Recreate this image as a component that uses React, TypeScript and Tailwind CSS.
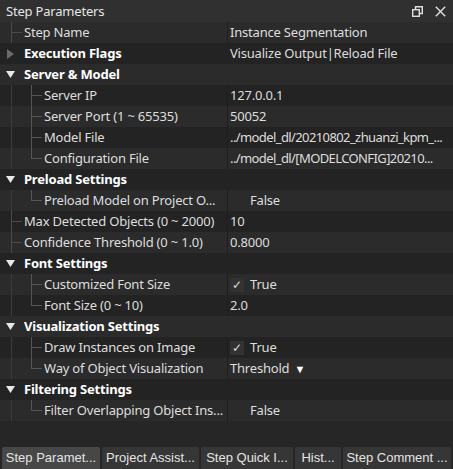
import React from "react";

type Row =
  | { kind: "group"; label: string; open: boolean; value?: string }
  | { kind: "leaf"; label: string; value: string; depth: 0 | 1; last?: boolean; check?: "on" | "off"; drop?: boolean; tight?: boolean };

const rows: Row[] = [
  { kind: "leaf", label: "Step Name", value: "Instance Segmentation", depth: 0 },
  { kind: "group", label: "Execution Flags", open: false, value: "Visualize Output|Reload File" },
  { kind: "group", label: "Server & Model", open: true },
  { kind: "leaf", label: "Server IP", value: "127.0.0.1", depth: 1 },
  { kind: "leaf", label: "Server Port (1 ~ 65535)", value: "50052", depth: 1 },
  { kind: "leaf", label: "Model File", value: "../model_dl/20210802_zhuanzi_kpm_...", depth: 1, tight: true },
  { kind: "leaf", label: "Configuration File", value: "../model_dl/[MODELCONFIG]20210...", depth: 1, last: true, tight: true },
  { kind: "group", label: "Preload Settings", open: true },
  { kind: "leaf", label: "Preload Model on Project O...", value: "False", depth: 1, last: true, check: "off" },
  { kind: "leaf", label: "Max Detected Objects (0 ~ 2000)", value: "10", depth: 0 },
  { kind: "leaf", label: "Confidence Threshold (0 ~ 1.0)", value: "0.8000", depth: 0 },
  { kind: "group", label: "Font Settings", open: true },
  { kind: "leaf", label: "Customized Font Size", value: "True", depth: 1, check: "on" },
  { kind: "leaf", label: "Font Size (0 ~ 10)", value: "2.0", depth: 1, last: true },
  { kind: "group", label: "Visualization Settings", open: true },
  { kind: "leaf", label: "Draw Instances on Image", value: "True", depth: 1, check: "on" },
  { kind: "leaf", label: "Way of Object Visualization", value: "Threshold", depth: 1, last: true, drop: true },
  { kind: "group", label: "Filtering Settings", open: true },
  { kind: "leaf", label: "Filter Overlapping Object Ins...", value: "False", depth: 1, last: true, check: "off" },
];

const tabs = [
  { label: "Step Paramet...", w: "w-[98px]", active: true },
  { label: "Project Assist...", w: "w-[97px]" },
  { label: "Step Quick I...", w: "w-[92px]" },
  { label: "Hist...", w: "w-[46px]" },
  { label: "Step Comment ...", w: "w-[108px]" },
];

function Branch({ row }: { row: Extract<Row, { kind: "leaf" }> }) {
  if (row.depth === 0) {
    return (
      <div className="relative w-[24px] h-full shrink-0">
        <span className="absolute left-[11px] top-0 bottom-0 w-px bg-[#4a4a4a]" />
        <span className="absolute left-[11px] top-[10px] w-[11px] h-px bg-[#4a4a4a]" />
      </div>
    );
  }
  return (
    <div className="relative w-[44px] h-full shrink-0">
      <span className="absolute left-[11px] top-0 bottom-0 w-px bg-[#3c3c3c]" />
      <span className={`absolute left-[31px] top-0 w-px bg-[#555] ${row.last ? "h-[11px]" : "h-full"}`} />
      <span className="absolute left-[31px] top-[10px] w-[11px] h-px bg-[#555]" />
    </div>
  );
}

export default function App() {
  return (
    <div className="w-[453px] h-[469px] bg-[#262626] flex flex-col overflow-hidden text-[13px] tracking-[-0.2px] text-[#dedede] [font-family:'Noto_Sans','Open_Sans',sans-serif]">
      {/* title */}
      <div className="h-[22px] shrink-0 bg-[#303030] flex items-center justify-between pl-[6px] pr-[6px]">
        <span className="text-[#e6e6e6] leading-none">Step Parameters</span>
        <div className="flex items-center gap-[12px] pr-[1px]">
          <svg width="11" height="11" viewBox="0 0 11 11" fill="none" stroke="#e0e0e0" strokeWidth="1.4">
            <rect x="0.7" y="3.7" width="6.6" height="6.6" />
            <path d="M3.5 3.5V0.7H10.3V7.5H7.5" />
          </svg>
          <svg width="11" height="11" viewBox="0 0 11 11" stroke="#e0e0e0" strokeWidth="1.4">
            <path d="M0.8 0.8L10.2 10.2M10.2 0.8L0.8 10.2" />
          </svg>
        </div>
      </div>

      {/* tree */}
      <div className="flex flex-col">
        {rows.map((row, i) => {
          const bg = i % 2 === 0 ? "bg-[#2b2b2b]" : "bg-[#232323]";
          if (row.kind === "group") {
            return (
              <div key={i} className={`h-[21px] flex items-center ${bg}`}>
                <div className="w-[24px] h-full flex items-center justify-center pr-[4px]">
                  {row.open ? (
                    <svg width="9" height="7" viewBox="0 0 9 7"><path d="M0 0H9L4.5 7Z" fill="#e8e8e8" /></svg>
                  ) : (
                    <svg width="7" height="10" viewBox="0 0 7 10"><path d="M0 0L7 5L0 10Z" fill="#6a6a6a" /></svg>
                  )}
                </div>
                <span className="w-[203px] font-bold text-white truncate">{row.label}</span>
                {row.value && <span className="pl-[3px]">{row.value}</span>}
              </div>
            );
          }
          return (
            <div key={i} className={`h-[21px] flex ${bg}`}>
              <Branch row={row} />
              <div className="flex-1 min-w-0 flex items-center whitespace-nowrap overflow-hidden">{row.label}</div>
              <div className="w-[226px] shrink-0 h-full border-l border-[#1e1e1e] flex items-center pl-[2px] whitespace-nowrap overflow-hidden">
                {row.check ? (
                  <>
                    <span
                      className={`w-[14px] h-[14px] flex items-center justify-center text-[12px] ${
                        row.check === "on" ? "bg-[#323232] text-[#d8d8d8]" : ""
                      }`}
                    >
                      {row.check === "on" ? "✓" : ""}
                    </span>
                    <span className="ml-[6px]">{row.value}</span>
                  </>
                ) : (
                  <span className={row.tight ? "tracking-[-0.6px]" : ""}>
                    {row.value}
                    {row.drop && <span className="ml-[5px] text-[11px] text-white">▼</span>}
                  </span>
                )}
              </div>
            </div>
          );
        })}
      </div>

      <div className="flex-1" />

      {/* tabs */}
      <div className="h-[23px] shrink-0 flex items-end gap-[2px] px-[2px] bg-[#262626] [font-family:'Liberation_Sans',Arial,sans-serif] text-[13px] tracking-normal">
        {tabs.map((t) => (
          <div
            key={t.label}
            className={`${t.w} h-[22px] flex items-center justify-center rounded-t-[2px] text-[#e4e4e4] ${
              t.active ? "bg-[#474747]" : "bg-[#363636]"
            }`}
          >
            {t.label}
          </div>
        ))}
      </div>
    </div>
  );
}
